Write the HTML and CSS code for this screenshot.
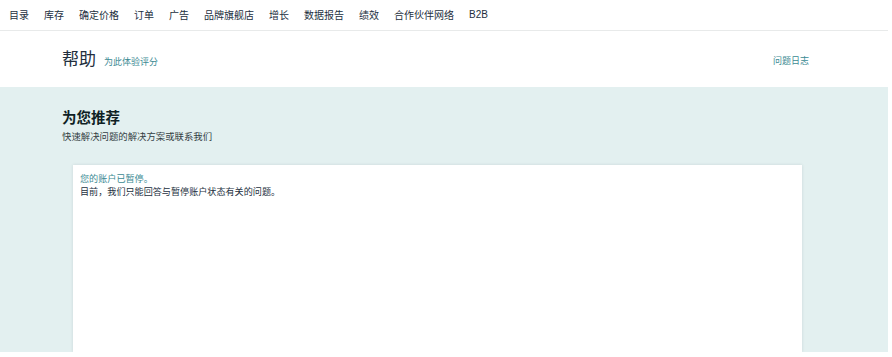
FILE: index.html
```html
<!DOCTYPE html>
<html>
<head>
  <meta charset="utf-8">
  <title>帮助</title>
  <link rel="stylesheet" href="styles.css">
</head>
<body>
  <div class="page">
    <nav class="topnav">
      <a>目录</a>
      <a>库存</a>
      <a>确定价格</a>
      <a>订单</a>
      <a>广告</a>
      <a>品牌旗舰店</a>
      <a>增长</a>
      <a>数据报告</a>
      <a>绩效</a>
      <a>合作伙伴网络</a>
      <a class="latin">B2B</a>
    </nav>

    <header class="help-header">
      <div class="title-group">
        <h1>帮助</h1>
        <a class="rate-link">为此体验评分</a>
      </div>
      <a class="log-link">问题日志</a>
    </header>

    <main class="recommend">
      <h2>为您推荐</h2>
      <p class="subtitle">快速解决问题的解决方案或联系我们</p>

      <div class="card">
        <div class="card-title">您的账户已暂停。</div>
        <div class="card-text">目前，我们只能回答与暂停账户状态有关的问题。</div>
      </div>
    </main>
  </div>
</body>
</html>
```

FILE: styles.css
```css
* {
  margin: 0;
  padding: 0;
  box-sizing: border-box;
}

body {
  font-family: "Noto Sans CJK SC", "Noto Sans", sans-serif;
  background: #fff;
  color: #232f3e;
}

.page {
  width: 888px;
  height: 352px;
  overflow: hidden;
  display: flex;
  flex-direction: column;
  background: #e3f0f0;
}

.topnav {
  height: 31px;
  background: #fff;
  border-bottom: 1px solid #e8eaea;
  display: flex;
  align-items: center;
  gap: 15px;
  padding: 0 9px 1px;
  font-size: 10px;
  color: #232f3e;
}

.topnav .latin {
  font-family: "Liberation Sans", "Noto Sans", sans-serif;
  font-size: 10px;
}

.help-header {
  height: 56px;
  background: #fff;
  display: flex;
  align-items: center;
  justify-content: space-between;
  padding: 0 79px 0 62px;
}

.title-group {
  display: flex;
  align-items: baseline;
  gap: 8px;
  margin-top: -3px;
}

.help-header h1 {
  font-size: 17px;
  font-weight: 400;
  color: #232f3e;
}

.rate-link,
.log-link {
  font-size: 9px;
  color: #3b8a93;
}

.log-link {
  margin-top: 2px;
}

.recommend {
  flex: 1;
  padding: 20px 86px 0 62px;
  display: flex;
  flex-direction: column;
}

.recommend h2 {
  font-size: 14.5px;
  font-weight: 700;
  color: #0f1f24;
  line-height: 20px;
}

.subtitle {
  font-size: 9.4px;
  color: #333e44;
  margin-top: 2px;
  line-height: 14px;
}

.card {
  flex: 1;
  background: #fff;
  margin: 22px 0 0 11px;
  padding: 7px 7px;
  box-shadow: 0 0 3px rgba(0, 40, 50, 0.12);
  font-size: 9.1px;
  line-height: 13px;
}

.card-title {
  color: #3b8a93;
}

.card-text {
  color: #232f3e;
}
```
